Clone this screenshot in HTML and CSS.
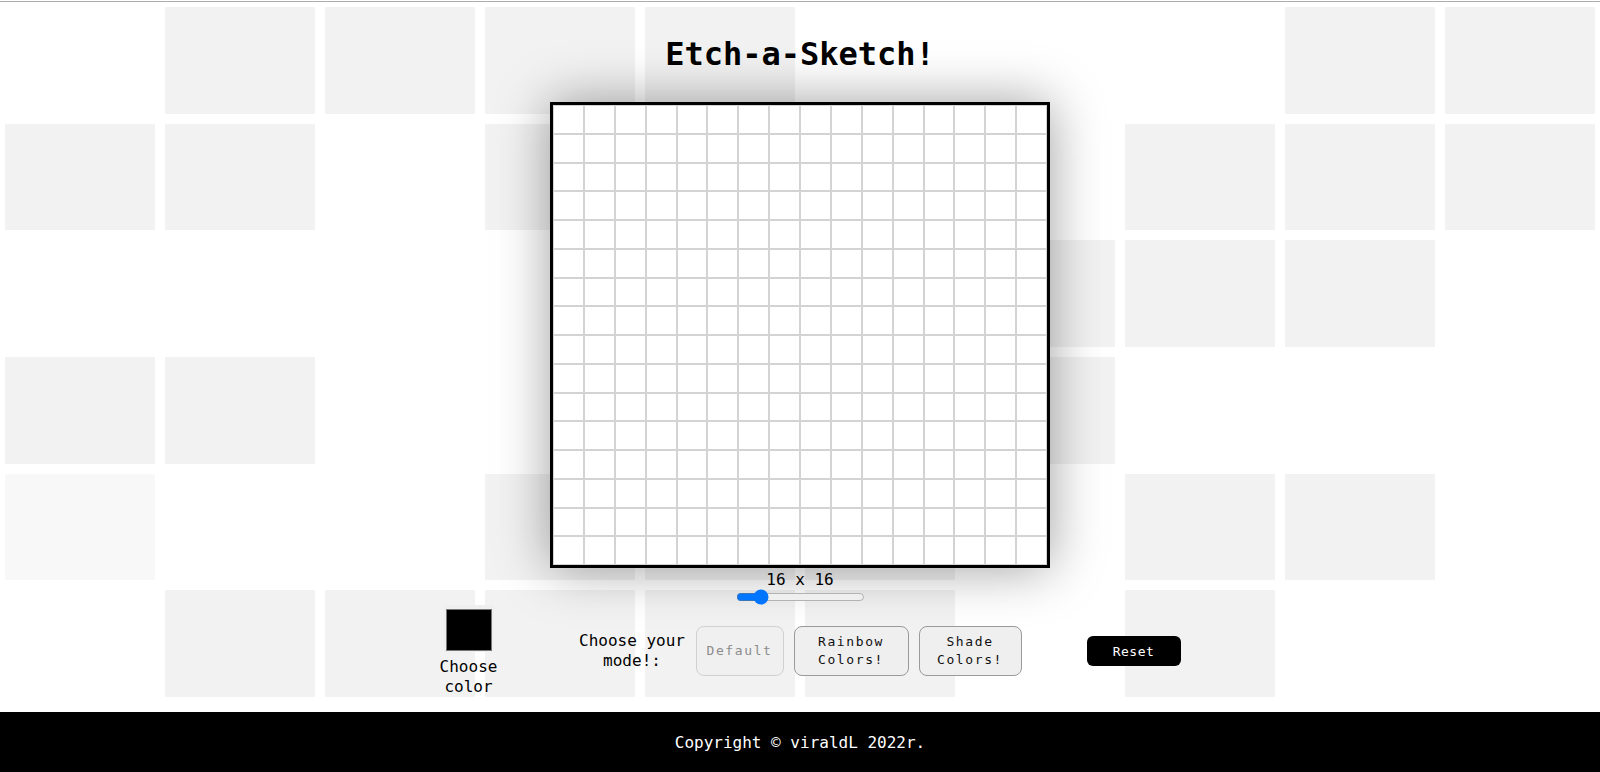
FILE: index.html
```html
<!DOCTYPE html>
<html lang="en">
<head>
<meta charset="utf-8">
<title>Etch-a-Sketch</title>
<link rel="stylesheet" href="styles.css">
</head>
<body>
<div class="stage">
  <div class="tiles">
    <div class="tile"></div><div class="tile on"></div><div class="tile on"></div><div class="tile on"></div><div class="tile on"></div><div class="tile"></div><div class="tile"></div><div class="tile"></div><div class="tile on"></div><div class="tile on"></div>
    <div class="tile on"></div><div class="tile on"></div><div class="tile"></div><div class="tile on"></div><div class="tile on"></div><div class="tile on"></div><div class="tile"></div><div class="tile on"></div><div class="tile on"></div><div class="tile on"></div>
    <div class="tile"></div><div class="tile"></div><div class="tile"></div><div class="tile"></div><div class="tile on"></div><div class="tile on"></div><div class="tile on"></div><div class="tile on"></div><div class="tile on"></div><div class="tile"></div>
    <div class="tile on"></div><div class="tile on"></div><div class="tile"></div><div class="tile"></div><div class="tile on"></div><div class="tile on"></div><div class="tile on"></div><div class="tile"></div><div class="tile"></div><div class="tile"></div>
    <div class="tile faint"></div><div class="tile"></div><div class="tile"></div><div class="tile on"></div><div class="tile on"></div><div class="tile on"></div><div class="tile"></div><div class="tile on"></div><div class="tile on"></div><div class="tile"></div>
    <div class="tile"></div><div class="tile on"></div><div class="tile on"></div><div class="tile on"></div><div class="tile on"></div><div class="tile on"></div><div class="tile"></div><div class="tile on"></div><div class="tile"></div><div class="tile"></div>
  </div>
  <main class="main">
    <h1 class="title">Etch-a-Sketch!</h1>
    <div class="board" id="board"></div>
    <div class="size-label">16 x 16</div>
    <input class="size-slider" type="range" min="1" max="100" value="16">
    <div class="controls">
      <label class="chooser">
        <input class="color-input" type="color" value="#000000">
        <span class="chooser-text">Choose color</span>
      </label>
      <div class="mode-text">Choose your mode!:</div>
      <button class="mode-btn default" disabled>Default</button>
      <button class="mode-btn rainbow">Rainbow Colors!</button>
      <button class="mode-btn shade">Shade Colors!</button>
      <button class="reset-btn">Reset</button>
    </div>
  </main>
</div>
<footer class="footer">Copyright © viraldL 2022r.</footer>
<script>
  var b = document.getElementById('board');
  for (var i = 0; i < 256; i++) {
    var c = document.createElement('div');
    c.className = 'cell';
    b.appendChild(c);
  }
</script>
</body>
</html>
```
FILE: styles.css
```css
html {
  background: #fff;
}

body {
  margin: 1px 0 0;
  border-top: 1px solid #ababab;
  font-family: "DejaVu Sans Mono", "Liberation Mono", monospace;
  color: #000;
  background: #fff;
}

.stage {
  display: grid;
}

.tiles,
.main {
  grid-area: 1 / 1;
}

.tiles {
  display: grid;
  box-sizing: border-box;
  height: 700px;
  grid-template-columns: repeat(10, 150px);
  grid-template-rows: repeat(6, 1fr);
  gap: 10px;
  padding: 5px;
}

.tile.on {
  background: #f2f2f2;
}

.tile.faint {
  background: #f8f8f8;
}

.main {
  display: flex;
  flex-direction: column;
  align-items: center;
  position: relative;
}

.title {
  margin: 33px 0 0;
  font-size: 32px;
  line-height: 38px;
  font-weight: bold;
  letter-spacing: 0;
}

.board {
  margin-top: 29px;
  width: 494px;
  height: 460px;
  border: 3px solid #000;
  background: #fff;
  display: grid;
  grid-template-columns: repeat(16, 1fr);
  grid-template-rows: repeat(16, 1fr);
  box-shadow: 0 0 50px rgba(0, 0, 0, 0.38);
}

.cell {
  border: 1px solid #d3d3d3;
}

.size-label {
  margin-top: 2px;
  font-size: 16px;
  line-height: 19px;
}

.size-slider {
  margin: 0;
  width: 129px;
  height: 16px;
}

.controls {
  display: flex;
  align-items: center;
  margin-left: 20px;
}

.chooser {
  width: 58px;
  display: flex;
  flex-direction: column;
  align-items: center;
  text-align: center;
  font-size: 16px;
  line-height: 20.5px;
}

.color-input {
  -webkit-appearance: none;
  appearance: none;
  display: block;
  width: 50px;
  height: 47px;
  padding: 0;
  margin: 0;
  border: none;
  background: #efefef;
}

.color-input::-webkit-color-swatch-wrapper {
  padding: 4px 2px 1px;
}

.color-input::-webkit-color-swatch {
  border: 1px solid #777;
  border-radius: 0;
}

.chooser-text {
  margin-top: 4.5px;
}

.mode-text {
  width: 107px;
  margin-left: 81px;
  text-align: center;
  font-size: 16px;
  line-height: 20.5px;
}

.mode-btn {
  height: 50px;
  margin-left: 10px;
  padding: 0 10px;
  font-family: "DejaVu Sans Mono", "Liberation Mono", monospace;
  font-size: 13px;
  line-height: 18px;
  letter-spacing: 1.6px;
  color: #111;
  background: #efefef;
  border: 1px solid #9a9a9a;
  border-radius: 8px;
}

.mode-btn.default {
  color: #8c8c8c;
  border-color: #d0d0d0;
  background: #f0f0f0;
}

.mode-btn.rainbow {
  width: 115px;
}

.mode-btn.shade {
  width: 103px;
}

.reset-btn {
  margin-left: 65px;
  width: 94px;
  height: 30px;
  padding: 0;
  font-family: "DejaVu Sans Mono", "Liberation Mono", monospace;
  font-size: 13px;
  letter-spacing: 0.5px;
  color: #fff;
  background: #000;
  border: none;
  border-radius: 6px;
}

.footer {
  margin-top: 10px;
  height: 60px;
  display: flex;
  align-items: center;
  justify-content: center;
  background: #000;
  color: #fff;
  font-size: 16px;
}
```
